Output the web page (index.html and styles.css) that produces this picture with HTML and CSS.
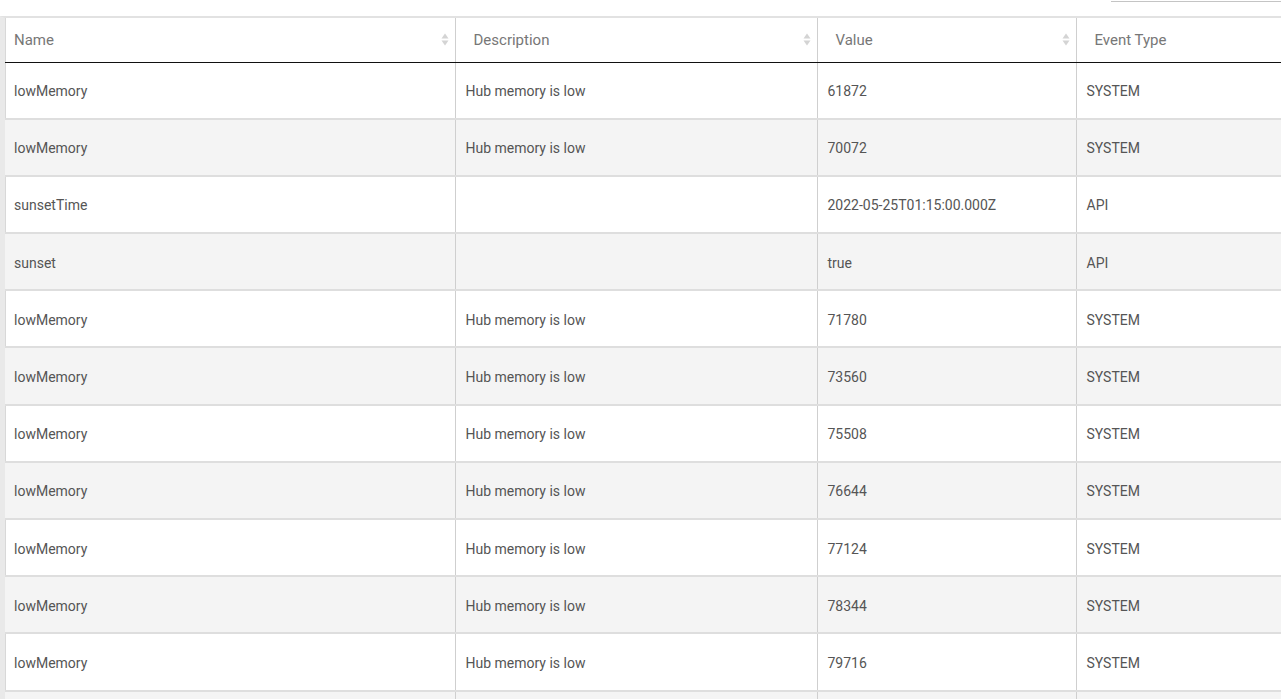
FILE: index.html
```html
<!DOCTYPE html>
<html>
<head>
<meta charset="utf-8">
<link rel="stylesheet" href="styles.css">
</head>
<body>
<div class="toolbar"><div class="search-line"></div></div>
<div class="panel">
<table class="events">
  <colgroup>
    <col class="c-name"><col class="c-desc"><col class="c-val"><col class="c-type">
  </colgroup>
  <thead>
    <tr>
      <th class="first"><div class="th-inner"><span>Name</span><svg class="sort" width="8" height="13" viewBox="0 0 8 13"><path d="M4 0.5 L7.5 5.5 H0.5 Z" fill="#d4d4d4"/><path d="M4 12.5 L7.5 7.5 H0.5 Z" fill="#d4d4d4"/></svg></div></th>
      <th><div class="th-inner"><span>Description</span><svg class="sort" width="8" height="13" viewBox="0 0 8 13"><path d="M4 0.5 L7.5 5.5 H0.5 Z" fill="#d4d4d4"/><path d="M4 12.5 L7.5 7.5 H0.5 Z" fill="#d4d4d4"/></svg></div></th>
      <th><div class="th-inner"><span>Value</span><svg class="sort" width="8" height="13" viewBox="0 0 8 13"><path d="M4 0.5 L7.5 5.5 H0.5 Z" fill="#d4d4d4"/><path d="M4 12.5 L7.5 7.5 H0.5 Z" fill="#d4d4d4"/></svg></div></th>
      <th><div class="th-inner"><span>Event Type</span></div></th>
    </tr>
  </thead>
  <tbody>
    <tr><td>lowMemory</td><td>Hub memory is low</td><td>61872</td><td>SYSTEM</td></tr>
    <tr><td>lowMemory</td><td>Hub memory is low</td><td>70072</td><td>SYSTEM</td></tr>
    <tr><td>sunsetTime</td><td></td><td>2022-05-25T01:15:00.000Z</td><td>API</td></tr>
    <tr><td>sunset</td><td></td><td>true</td><td>API</td></tr>
    <tr><td>lowMemory</td><td>Hub memory is low</td><td>71780</td><td>SYSTEM</td></tr>
    <tr><td>lowMemory</td><td>Hub memory is low</td><td>73560</td><td>SYSTEM</td></tr>
    <tr><td>lowMemory</td><td>Hub memory is low</td><td>75508</td><td>SYSTEM</td></tr>
    <tr><td>lowMemory</td><td>Hub memory is low</td><td>76644</td><td>SYSTEM</td></tr>
    <tr><td>lowMemory</td><td>Hub memory is low</td><td>77124</td><td>SYSTEM</td></tr>
    <tr><td>lowMemory</td><td>Hub memory is low</td><td>78344</td><td>SYSTEM</td></tr>
    <tr><td>lowMemory</td><td>Hub memory is low</td><td>79716</td><td>SYSTEM</td></tr>
    <tr><td>lowMemory</td><td>Hub memory is low</td><td>80412</td><td>SYSTEM</td></tr>
  </tbody>
</table>
</div>
</body>
</html>
```
FILE: styles.css
```css
html, body {
  margin: 0;
  padding: 0;
  background: #ffffff;
  overflow: hidden;
  font-family: Roboto, "Liberation Sans", sans-serif;
  font-size: 14px;
  color: #555555;
}

.toolbar {
  height: 16px;
  display: flex;
  justify-content: flex-end;
}

.search-line {
  width: 170px;
  height: 1px;
  margin-top: 1px;
  background: #c4c4c4;
}

.panel {
  border-top: 2px solid #e2e2e2;
  border-left: 5px solid #e9e9e9;
  box-shadow: inset 1px 0 0 #d8d8d8;
  width: 1600px;
}

.events {
  border-collapse: collapse;
  table-layout: fixed;
  width: 1500px;
}

.c-name { width: 450px; }
.c-desc { width: 362px; }
.c-val { width: 259px; }
.c-type { width: 429px; }

.events th {
  height: 44px;
  padding: 0 6px 0 18px;
  font-weight: 400;
  font-size: 15px;
  text-align: left;
  color: #777777;
  border-left: 1px solid #cfcfcf;
  border-bottom: 1px solid #111111;
  box-sizing: border-box;
}

.events th.first {
  padding-left: 9px;
  border-left: none;
}

.th-inner {
  display: flex;
  justify-content: space-between;
  align-items: center;
}

.sort {
  display: block;
  flex-shrink: 0;
}

.events td {
  height: 53.2px;
  padding: 2px 10px 0;
  line-height: 20px;
  vertical-align: middle;
  border-left: 1px solid #cfcfcf;
  border-bottom: 2px solid #dedede;
  white-space: nowrap;
}

.events td:first-child {
  padding-left: 9px;
  border-left: none;
}

.events tbody tr:nth-child(even) td {
  background: #f4f4f4;
}
```
